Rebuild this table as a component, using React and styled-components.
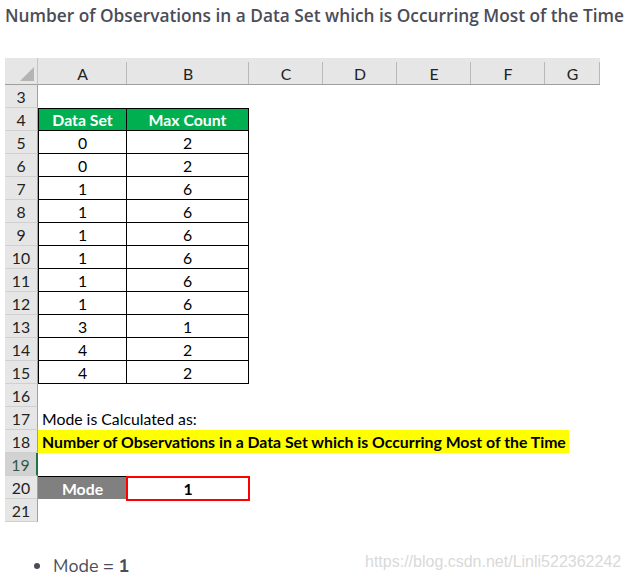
import React from "react";
import styled, { createGlobalStyle } from "styled-components";

const GlobalStyle = createGlobalStyle`
  body {
    margin: 0;
    background: #fff;
  }
`;

const Page = styled.div`
  width: 630px;
  height: 579px;
  overflow: hidden;
`;

const Title = styled.h1`
  margin: 0;
  height: 58px;
  padding: 4px 0 0 5px;
  box-sizing: border-box;
  font-family: "Open Sans", sans-serif;
  font-weight: 600;
  font-size: 17.3px;
  line-height: 24px;
  color: #4b4c57;
  white-space: nowrap;
`;

const Sheet = styled.div`
  display: grid;
  grid-template-columns: 33px 89px 122px 74px 74px 74px 74px 55px;
  grid-template-rows: 27px repeat(19, 23px);
  margin-left: 5px;
  font-family: Lato, "Liberation Sans", sans-serif;
  font-size: 15.8px;
  color: #000;
`;

const Corner = styled.div`
  grid-row: 1;
  grid-column: 1;
  background: #e6e6e6;
  border-bottom: 1px solid #9f9f9f;
  border-right: 1px solid #c4c4c4;
  box-sizing: border-box;
  display: flex;
  align-items: flex-end;
  justify-content: flex-end;
  padding: 0 3px 3px 0;
`;

const ColHead = styled.div`
  grid-row: 1;
  background: linear-gradient(#b9b9b9, #b9b9b9) right bottom / 1px 22px no-repeat,
    #e6e6e6;
  border-bottom: 1px solid #9f9f9f;
  box-sizing: border-box;
  display: flex;
  align-items: center;
  justify-content: center;
  padding-top: 4px;
  color: #222;
`;

const RowHead = styled.div`
  grid-column: 1;
  grid-row: ${(p) => p.$row};
  background: ${(p) => (p.$active ? "#d2d2d2" : "#e6e6e6")};
  border-right: ${(p) => (p.$active ? "2px solid #217346" : "1px solid #9f9f9f")};
  border-bottom: 1px solid #d0d0d0;
  box-sizing: border-box;
  display: flex;
  align-items: center;
  justify-content: center;
  color: ${(p) => (p.$active ? "#2d5a3d" : "#222")};
`;

const Cell = styled.div`
  grid-row: ${(p) => p.$row};
  grid-column: ${(p) => p.$col};
  box-sizing: border-box;
  display: flex;
  align-items: center;
  justify-content: center;
`;

const TableCell = styled(Cell)`
  border-right: 1px solid #000;
  border-bottom: 1px solid #000;
  border-left: ${(p) => (p.$col === 2 ? "1px solid #000" : "none")};
  border-top: ${(p) => (p.$top ? "1px solid #000" : "none")};
  background: ${(p) => (p.$head ? "#00b050" : "#fff")};
  color: ${(p) => (p.$head ? "#fff" : "#000")};
  font-weight: ${(p) => (p.$head ? 700 : 400)};
`;

const TextCell = styled(Cell)`
  grid-column: 2 / -1;
  justify-content: flex-start;
  white-space: nowrap;
`;

const Highlight = styled.div`
  width: 531px;
  height: 100%;
  background: #ffff00;
  font-weight: 700;
  display: flex;
  align-items: center;
  padding-left: 4px;
  box-sizing: border-box;
`;

const Note = styled.span`
  padding-left: 4px;
`;

const ModeLabel = styled(Cell)`
  background: #808080;
  color: #fff;
  font-weight: 700;
  border-top: 1px solid #000;
`;

const ModeValue = styled(Cell)`
  border: 2px solid #ff0000;
  margin: 0 -1px -2px -1px;
  font-weight: 700;
`;

const Footer = styled.div`
  display: flex;
  align-items: flex-start;
  margin-top: 31px;
`;

const List = styled.ul`
  margin: 0;
  padding-left: 53px;
  width: 312px;
  box-sizing: border-box;
  font-family: "Nunito", Lato, sans-serif;
  font-size: 18px;
  line-height: 26px;
  color: #4b4c57;

  li::marker {
    color: #4b4c57;
  }
`;

const Strong = styled.b`
  font-weight: 700;
`;

const Watermark = styled.span`
  margin-left: 53px;
  font-family: "Liberation Sans", Arial, sans-serif;
  font-size: 16px;
  color: #d9d9d9;
  white-space: nowrap;
`;

const columns = ["A", "B", "C", "D", "E", "F", "G"];

const data = [
  [0, 2],
  [0, 2],
  [1, 6],
  [1, 6],
  [1, 6],
  [1, 6],
  [1, 6],
  [1, 6],
  [3, 1],
  [4, 2],
  [4, 2],
];

// grid row index for a sheet row number (header is grid row 1, sheet row 3 is grid row 2)
const gr = (n) => n - 1;

export default function App() {
  const rowNums = [];
  for (let n = 3; n <= 21; n++) rowNums.push(n);

  return (
    <Page>
      <GlobalStyle />
      <Title>
        Number of Observations in a Data Set which is Occurring Most of the Time
      </Title>
      <Sheet>
        <Corner>
          <svg width="14" height="14" viewBox="0 0 14 14">
            <polygon points="14,0 14,14 0,14" fill="#b4b4b4" />
          </svg>
        </Corner>
        {columns.map((c) => (
          <ColHead key={c}>{c}</ColHead>
        ))}
        {rowNums.map((n) => (
          <RowHead key={n} $row={gr(n)} $active={n === 19}>
            {n}
          </RowHead>
        ))}

        <TableCell $row={gr(4)} $col={2} $head $top>
          Data Set
        </TableCell>
        <TableCell $row={gr(4)} $col={3} $head $top>
          Max Count
        </TableCell>
        {data.map(([a, b], i) => (
          <React.Fragment key={i}>
            <TableCell $row={gr(5 + i)} $col={2}>
              {a}
            </TableCell>
            <TableCell $row={gr(5 + i)} $col={3}>
              {b}
            </TableCell>
          </React.Fragment>
        ))}

        <TextCell $row={gr(17)}>
          <Note>Mode is Calculated as:</Note>
        </TextCell>
        <TextCell $row={gr(18)}>
          <Highlight>
            Number of Observations in a Data Set which is Occurring Most of the Time
          </Highlight>
        </TextCell>

        <ModeLabel $row={gr(20)} $col={2}>
          Mode
        </ModeLabel>
        <ModeValue $row={gr(20)} $col={3}>
          1
        </ModeValue>
      </Sheet>
      <Footer>
        <List>
          <li>
            Mode = <Strong>1</Strong>
          </li>
        </List>
        <Watermark>https://blog.csdn.net/Linli522362242</Watermark>
      </Footer>
    </Page>
  );
}
